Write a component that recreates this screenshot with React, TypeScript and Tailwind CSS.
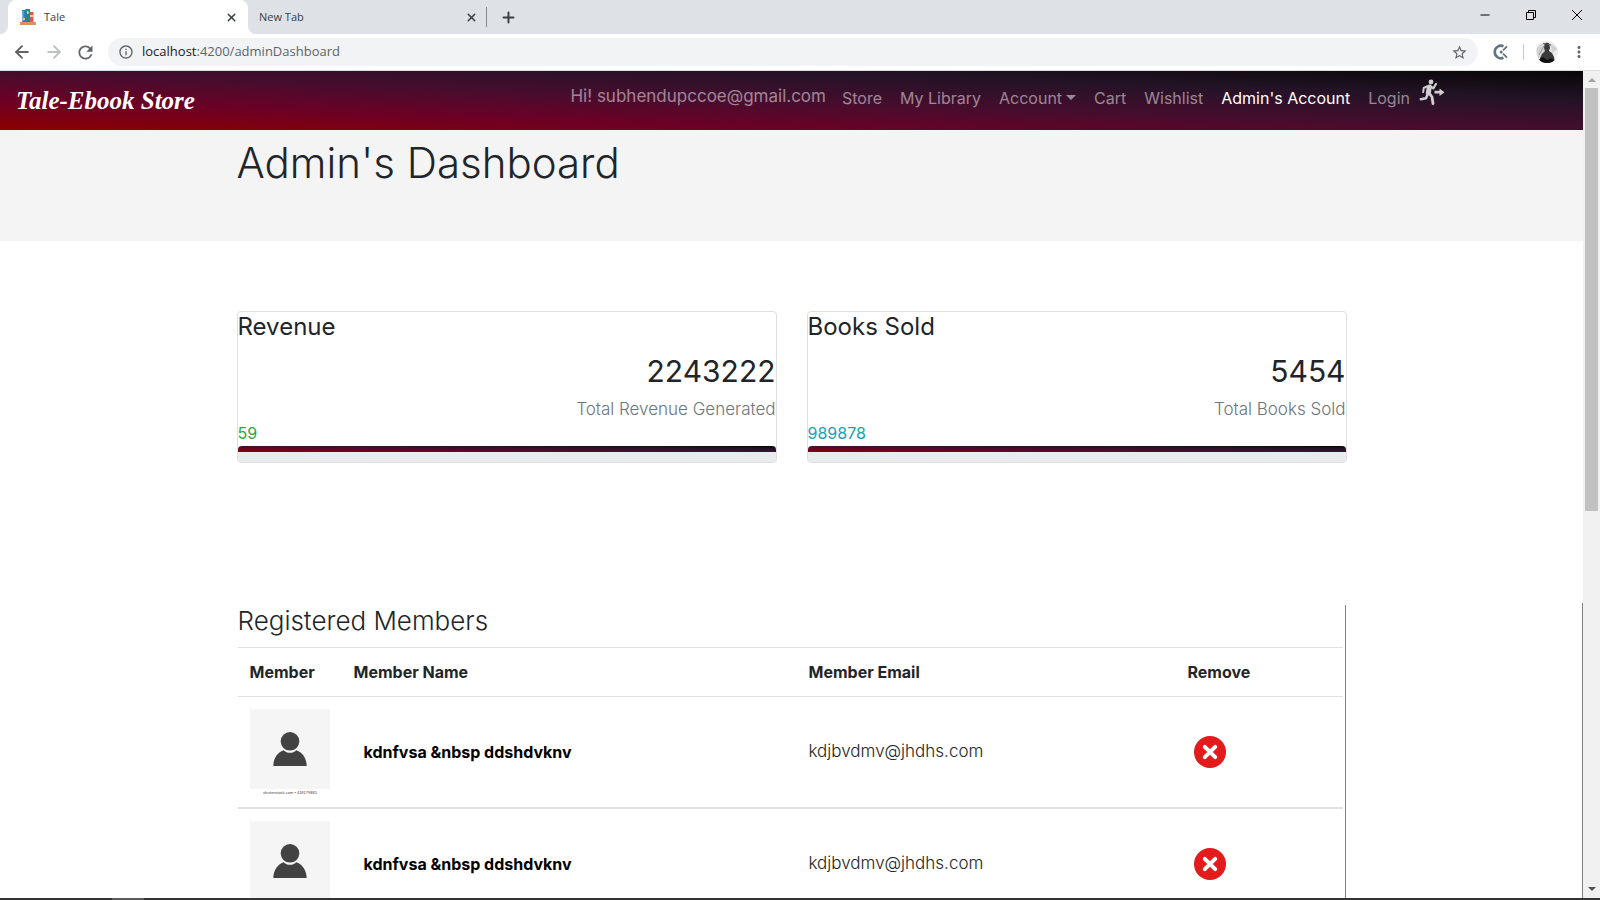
import type { ReactNode } from "react";
import { ArrowLeft, ArrowRight, Plus, X, Minus } from "lucide-react";
import { MdRefresh, MdInfoOutline, MdStarBorder, MdMoreVert } from "react-icons/md";

const gradient =
  "bg-[linear-gradient(to_top_right,#8b0000_0%,#6d0025_25%,#450d2e_50%,#231326_75%,#070707_100%)]";

function BooksIcon() {
  return (
    <svg viewBox="0 0 16 16" className="size-4 shrink-0" aria-hidden="true">
      <rect x="2" y="1" width="4" height="12" fill="#2f7fc1" />
      <rect x="2" y="2" width="1.5" height="10" fill="#6db3e8" />
      <rect x="5.5" y="0" width="4.5" height="13" fill="#1f8a83" />
      <rect x="7" y="2" width="1.5" height="3" fill="#bfe3df" />
      <rect x="10" y="3" width="3.5" height="10" fill="#e2574c" />
      <rect x="10" y="6" width="3.5" height="2" fill="#f5c7a0" />
      <rect x="3" y="9" width="2" height="2" fill="#f2c94c" />
      <rect x="0" y="13" width="16" height="3" fill="#dd9163" />
    </svg>
  );
}

function ClockIcon() {
  return (
    <svg viewBox="0 0 16 16" className="size-4" fill="none" stroke="#5f7580" aria-hidden="true">
      <path d="M10.5 2.2A6.3 6.3 0 1 0 10.5 13.8" strokeWidth="2.6" />
      <path d="M10 6.3 14 2.3M10 9.7l4 4" strokeWidth="1.8" />
      <circle cx="8.2" cy="8" r="1.5" fill="#5f7580" stroke="none" />
    </svg>
  );
}

function ProfilePhoto() {
  return (
    <svg viewBox="0 0 22 22" className="size-[22px]" aria-hidden="true">
      <defs>
        <clipPath id="photo">
          <circle cx="11" cy="11" r="11" />
        </clipPath>
      </defs>
      <g clipPath="url(#photo)">
        <rect width="22" height="22" fill="#ededed" />
        <path d="M0 6 9 2v8L2 18zM14 2l8 6-6 4z" fill="#d2d2d2" />
        <path d="M8.500 3.500C8.500 1 13.500 1 13.500 3.500L14 7 13 10l3 2 2 4 1 6H4l0-5 2-4 3-3-1-3z" fill="#3a3a3a" />
        <path d="M2 19l5-3 4 3 4-2 5 3v2H2z" fill="#111" />
        <path d="M7 2.500l8 1.500" stroke="#555" />
        <path d="M3 14 8 5" stroke="#888" strokeWidth=".8" />
      </g>
    </svg>
  );
}

function LogoutIcon() {
  return (
    <svg viewBox="0 0 26 26" className="h-[26px] w-[26px]" fill="none" stroke="#cfcfcf" strokeLinecap="round" strokeLinejoin="round" aria-hidden="true">
      <circle cx="12" cy="3" r="2.4" fill="#cfcfcf" stroke="none" />
      <path d="M10.300 8 9.300 14" strokeWidth="5" />
      <path d="M8 7.300 4.700 9 4.200 13" strokeWidth="2" />
      <path d="M11.500 7.500 14.300 9.300 17 5" strokeWidth="2.200" />
      <path d="M10.500 14.500 13 18l1 6.500" strokeWidth="2.800" />
      <path d="M8.500 15.500 7 19.200 1.800 20.300" strokeWidth="2.500" />
      <path d="M15.500 11.800h5V9.500l5 3.700-5 3.700v-2.300h-5z" fill="#cfcfcf" stroke="none" />
    </svg>
  );
}

function MemberPicture({ credit }: { credit?: string }) {
  return (
    <svg viewBox="0 0 80 86" className="block h-[86px] w-20" role="img" aria-label="Member picture">
      <rect width="80" height="80" fill="#f5f5f5" />
      <circle cx="40" cy="32.3" r="9.3" fill="#424242" />
      <path d="M23.3 57C23.5 49 27.5 43.5 33.5 41.2C37 44.6 43 44.6 46.5 41.2C52.5 43.5 56.5 49 56.7 57Z" fill="#424242" />
      {credit && (
        <text x="40" y="84.5" textAnchor="middle" fontSize="4" fontFamily="Liberation Sans, sans-serif" fill="#444">
          {credit}
        </text>
      )}
    </svg>
  );
}

function RemoveIcon() {
  return (
    <svg viewBox="0 0 32 32" className="block size-8" aria-hidden="true">
      <circle cx="16" cy="16" r="16" fill="#e31b1b" />
      <path d="M10.8 10.8 21.2 21.2M21.2 10.8 10.8 21.2" stroke="#fff" strokeWidth="4" strokeLinecap="round" />
    </svg>
  );
}

function BrowserChrome() {
  return (
    <header className="shrink-0 border-b border-[#dadce0] bg-white font-['Open_Sans',sans-serif] text-[#3c4043]">
      <div className="flex h-[34px] bg-[#dee1e6] text-[11px]">
        <div className="flex w-2 items-end bg-white">
          <span className="h-full w-2 rounded-br-lg bg-[#dee1e6]" />
        </div>
        <div className="flex w-60 items-center gap-2 rounded-t-lg bg-white pr-2.5 pl-3">
          <BooksIcon />
          <span className="grow">Tale</span>
          <button aria-label="Close Tale">
            <X size={13} strokeWidth={2.8} />
          </button>
        </div>
        <div className="bg-white">
          <div className="flex h-full w-[238px] items-center rounded-bl-lg bg-[#dee1e6] pr-2 pl-[11px]">
            <span className="grow">New Tab</span>
            <button aria-label="Close New Tab">
              <X size={13} strokeWidth={2.8} />
            </button>
          </div>
        </div>
        <span className="my-[7px] w-px bg-[#85888c]" />
        <button aria-label="New tab" className="ml-[13px]">
          <Plus size={17} strokeWidth={2.8} />
        </button>
        <div className="ml-auto flex items-center pb-1 text-black">
          <button aria-label="Minimize" className="flex w-[46px] justify-center">
            <Minus size={14} strokeWidth={1.8} />
          </button>
          <button aria-label="Restore" className="flex w-[46px] justify-center">
            <svg viewBox="0 0 10 10" className="size-2.5" fill="none" stroke="currentColor">
              <path d="M.5 2.5h7v7h-7zM2.5 2.5v-2h7v7h-2" />
            </svg>
          </button>
          <button aria-label="Close window" className="flex w-[46px] justify-center">
            <svg viewBox="0 0 10 10" className="size-2.5" stroke="currentColor">
              <path d="M0 0 10 10M10 0 0 10" />
            </svg>
          </button>
        </div>
      </div>
      <div className="flex h-9 items-center pr-3 pl-3">
        <button aria-label="Back" className="text-[#5f6368]">
          <ArrowLeft size={20} strokeWidth={2.3} />
        </button>
        <button aria-label="Forward" className="ml-3 text-[#bdc1c6]">
          <ArrowRight size={20} strokeWidth={2.3} />
        </button>
        <button aria-label="Reload" className="ml-[11px] text-[#5f6368]">
          <MdRefresh size={21} />
        </button>
        <div className="ml-3 flex h-7 grow items-center rounded-full bg-[#f1f3f4] px-2.5 text-[#5f6368]">
          <MdInfoOutline size={16} />
          <span className="ml-2 text-[13px]">
            <span className="text-[#202124]">localhost</span>:4200/adminDashboard
          </span>
          <button aria-label="Bookmark" className="ml-auto">
            <MdStarBorder size={17} />
          </button>
        </div>
        <button aria-label="Time tracker" className="ml-[15px]">
          <ClockIcon />
        </button>
        <span className="ml-3.5 h-4 w-px bg-[#c6c8cb]" />
        <button aria-label="Profile" className="ml-3">
          <ProfilePhoto />
        </button>
        <button aria-label="Menu" className="ml-3 text-[#5f6368]">
          <MdMoreVert size={18} />
        </button>
      </div>
    </header>
  );
}

function NavLink({ children, active = false }: { children: ReactNode; active?: boolean }) {
  return (
    <a
      href="#"
      className={
        active
          ? "flex items-center px-[9px] whitespace-nowrap text-white"
          : "flex items-center px-[9px] whitespace-nowrap text-white/50"
      }
    >
      {children}
    </a>
  );
}

function Navbar() {
  return (
    <nav className={`flex h-[59px] items-center pr-[138px] pl-4 ${gradient}`}>
      <a href="#" className="font-['Liberation_Serif',serif] text-[25px] font-bold text-white italic">
        Tale-Ebook Store
      </a>
      <div className="mb-1.5 ml-auto flex items-start text-base leading-6">
        <span className="mr-[7px] text-[17px] leading-5 text-white/50">Hi! subhendupccoe@gmail.com</span>
        <NavLink>Store</NavLink>
        <NavLink>My Library</NavLink>
        <NavLink>
          Account
          <span className="ml-1 border-x-[5px] border-t-[5px] border-x-transparent border-t-current" />
        </NavLink>
        <NavLink>Cart</NavLink>
        <NavLink>Wishlist</NavLink>
        <NavLink active>Admin's Account</NavLink>
        <NavLink>Login</NavLink>
      </div>
      <button aria-label="Log out" className="mb-[18px]">
        <LogoutIcon />
      </button>
    </nav>
  );
}

interface StatCardProps {
  title: string;
  value: string;
  caption: string;
  count: string;
  countClass: string;
}

function StatCard({ title, value, caption, count, countClass }: StatCardProps) {
  return (
    <article className="flex flex-col overflow-hidden rounded-[4px] border border-[#dfdfdf]">
      <h2 className="text-2xl leading-[29px]">{title}</h2>
      <p className="mt-3 text-right text-[30px] leading-9">{value}</p>
      <p className="mt-2 text-right text-[17px] leading-6 font-light text-[#6c757d]">{caption}</p>
      <p className={`text-base leading-6 ${countClass}`}>{count}</p>
      <div className="mt-px bg-[#e9ecef] pb-2.5">
        <div className={`h-1.5 rounded-t-[4px] ${gradient}`} />
      </div>
    </article>
  );
}

const members = [
  { id: 1, name: "kdnfvsa &nbsp ddshdvknv", email: "kdjbvdmv@jhdhs.com", credit: "shutterstock.com • 418179865" },
  { id: 2, name: "kdnfvsa &nbsp ddshdvknv", email: "kdjbvdmv@jhdhs.com" },
];

function MembersTable() {
  return (
    <table className="w-full table-fixed border-collapse text-left">
      <colgroup>
        <col className="w-[104px]" />
        <col className="w-[455px]" />
        <col />
        <col className="w-[167px]" />
      </colgroup>
      <thead>
        <tr className="border-y border-[#dee2e6] leading-6 font-bold">
          <th className="p-3">Member</th>
          <th className="p-3">Member Name</th>
          <th className="p-3">Member Email</th>
          <th className="p-3">Remove</th>
        </tr>
      </thead>
      <tbody>
        {members.map((member) => (
          <tr key={member.id} className="border-b-2 border-[#dee2e6]">
            <td className="p-3">
              <MemberPicture credit={member.credit} />
            </td>
            <td className="py-3 pl-[22px] font-bold text-black">{member.name}</td>
            <td className="p-3 text-[17px] font-light">{member.email}</td>
            <td className="py-3 pl-[18px]">
              <button aria-label={`Remove ${member.name}`} className="block">
                <RemoveIcon />
              </button>
            </td>
          </tr>
        ))}
      </tbody>
    </table>
  );
}

export default function App() {
  return (
    <div className="flex h-screen flex-col overflow-hidden bg-white font-['Inter',sans-serif] text-[#212529]">
      <BrowserChrome />
      <div className="flex min-h-0 grow">
        <main className="min-w-0 grow overflow-hidden">
          <Navbar />
          <div className="bg-[#f4f4f4] pt-[9px] pb-[54px]">
            <h1 className="mx-auto max-w-[1110px] text-[42px] leading-[48px] font-light">Admin's Dashboard</h1>
          </div>
          <section className="mx-auto mt-[70px] grid max-w-[1110px] grid-cols-2 gap-[30px]">
            <StatCard title="Revenue" value="2243222" caption="Total Revenue Generated" count="59" countClass="text-[#28a745]" />
            <StatCard title="Books Sold" value="5454" caption="Total Books Sold" count="989878" countClass="text-[#17a2b8]" />
          </section>
          <section className="mt-[140px] border-r border-[#808080] pt-0.5">
            <div className="mx-auto max-w-[1109px] border-r border-[#808080] pr-0.5 pb-10 pl-px">
              <h2 className="pb-[11px] text-[26px] leading-[31px] font-light">Registered Members</h2>
              <MembersTable />
            </div>
          </section>
        </main>
        <div className="flex w-[17px] shrink-0 flex-col items-center bg-[#f1f1f1] py-[7px]" aria-hidden="true">
          <span className="border-x-4 border-b-4 border-x-transparent border-b-[#a3a3a3]" />
          <span className="mt-1.5 h-[52%] w-[13px] bg-[#c1c1c1]" />
          <span className="mt-auto border-x-4 border-t-4 border-x-transparent border-t-[#505050]" />
        </div>
      </div>
      <div className="flex h-0.5 shrink-0 bg-[#333]">
        <span className="ml-28 w-8 bg-[#5c5c5c]" />
      </div>
    </div>
  );
}
